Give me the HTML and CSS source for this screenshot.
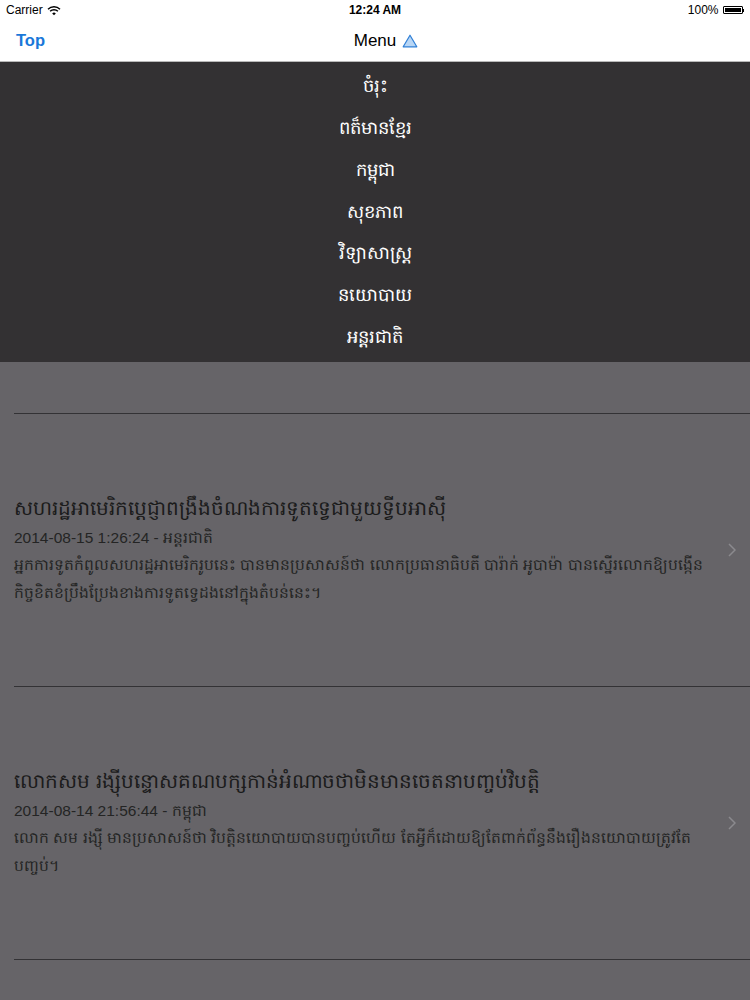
FILE: index.html
```html
<!DOCTYPE html>
<html lang="km">
<head>
<meta charset="utf-8">
<title>Menu</title>
<link rel="stylesheet" href="styles.css">
</head>
<body>
<div class="status">
  <div class="st-left">Carrier
    <svg class="wifi" width="14" height="11" viewBox="0 0 14 11"><path d="M1 4.2a8.5 8.5 0 0 1 12 0" fill="none" stroke="#000" stroke-width="1.4"/><path d="M3.1 6.3a5.5 5.5 0 0 1 7.8 0" fill="none" stroke="#000" stroke-width="1.4"/><path d="M5.2 8.4a2.5 2.5 0 0 1 3.6 0L7 10.3z" fill="#000"/></svg>
  </div>
  <div class="st-mid">12:24 AM</div>
  <div class="st-right">100%
    <span class="batt"><span class="batt-fill"></span></span><span class="batt-tip"></span>
  </div>
</div>
<div class="navbar">
  <div class="nav-left">Top</div>
  <div class="nav-title">Menu
    <svg class="tri" width="16" height="14" viewBox="0 0 16 14"><path d="M8 1.2L14.8 12.8H1.2z" fill="#b8d6f5" stroke="#2f7fd6" stroke-width="1.2" stroke-linejoin="round"/></svg>
  </div>
  <div class="nav-right"></div>
</div>
<div class="menu">
  <div class="menu-item">ចំរុះ</div>
  <div class="menu-item">ពត៏មានខ្មែរ</div>
  <div class="menu-item">កម្ពុជា</div>
  <div class="menu-item">សុខភាព</div>
  <div class="menu-item">វិទ្យាសាស្ត្រ</div>
  <div class="menu-item">នយោបាយ</div>
  <div class="menu-item">អន្តរជាតិ</div>
</div>
<div class="list">
  <div class="top-gap"></div>
  <div class="row">
    <div class="row-body">
      <div class="row-title">សហរដ្ឋអាមេរិកប្តេជ្ញាពង្រឹងចំណងការទូតទ្វេជាមួយទ្វីបអាស៊ី</div>
      <div class="row-date">2014-08-15 1:26:24 - អន្តរជាតិ</div>
      <div class="row-desc"> អ្នកការទូតកំពូលសហរដ្ឋអាមេរិករូបនេះ បានមានប្រសាសន៍ថា លោកប្រធានាធិបតី បារ៉ាក់ អូបាម៉ា បានស្នើរលោកឱ្យបង្កើន កិច្ចខិតខំប្រឹងប្រែងខាងការទូតទ្វេដងនៅក្នុងតំបន់នេះ។</div>
    </div>
    <svg class="chev" width="8" height="14" viewBox="0 0 8 14"><path d="M1 1l6 6-6 6" fill="none" stroke="#8b8a8e" stroke-width="1.5"/></svg>
  </div>
  <div class="row">
    <div class="row-body">
      <div class="row-title">លោកសម រង្ស៊ីបន្ទោសគណបក្សកាន់អំណាចថាមិនមានចេតនាបញ្ចប់វិបត្តិ</div>
      <div class="row-date">2014-08-14 21:56:44 - កម្ពុជា</div>
      <div class="row-desc"> លោក សម រង្ស៊ី មានប្រសាសន៍ថា វិបត្តិនយោបាយបានបញ្ចប់ហើយ តែអ្វីក៏ដោយឱ្យតែពាក់ព័ន្ធនឹងរឿងនយោបាយត្រូវតែ បញ្ចប់។</div>
    </div>
    <svg class="chev" width="8" height="14" viewBox="0 0 8 14"><path d="M1 1l6 6-6 6" fill="none" stroke="#8b8a8e" stroke-width="1.5"/></svg>
  </div>
</div>
</body>
</html>
```
FILE: styles.css
```css
html, body {
  margin: 0;
  padding: 0;
}
body {
  width: 750px;
  height: 1000px;
  overflow: hidden;
  background: #666468;
  font-family: "Liberation Sans", "Noto Sans", sans-serif;
}
.status {
  height: 20px;
  background: #fff;
  display: flex;
  align-items: center;
  justify-content: space-between;
  padding: 0 6px;
  font-size: 12px;
  color: #000;
}
.st-left {
  display: flex;
  align-items: center;
  gap: 4px;
  width: 120px;
}
.st-mid {
  font-weight: bold;
  font-size: 12px;
}
.st-right {
  display: flex;
  align-items: center;
  justify-content: flex-end;
  width: 120px;
}
.batt {
  display: inline-block;
  width: 20px;
  height: 8px;
  border: 1px solid #000;
  border-radius: 1px;
  margin-left: 4px;
  padding: 1px;
  box-sizing: border-box;
}
.batt-fill {
  display: block;
  width: 100%;
  height: 100%;
  background: #000;
}
.batt-tip {
  display: inline-block;
  width: 1.5px;
  height: 3px;
  background: #000;
}
.navbar {
  height: 42px;
  background: #fff;
  display: flex;
  align-items: center;
  justify-content: space-between;
  padding: 0 16px;
  box-sizing: border-box;
  border-bottom: 1px solid #b9b9b9;
}
.nav-left {
  width: 120px;
  color: #1a78d9;
  font-size: 16.5px;
  font-weight: bold;
}
.nav-right {
  width: 120px;
}
.nav-title {
  display: flex;
  align-items: center;
  gap: 6px;
  font-size: 17px;
  color: #000;
  padding-left: 22px;
}
.tri {
  margin-top: 1px;
}
.menu {
  background: #333133;
  height: 300px;
  box-sizing: border-box;
  padding-top: 7px;
  display: flex;
  flex-direction: column;
  align-items: center;
}
.menu-item {
  height: 43.2px;
  line-height: 34px;
  color: #fff;
  font-size: 18px;
  text-align: center;
}
.list {
  padding-left: 14px;
}
.top-gap {
  height: 51px;
  border-bottom: 1px solid #333235;
}
.row {
  height: 272px;
  border-bottom: 1px solid #333235;
  display: flex;
  align-items: center;
  padding-right: 14px;
}
.row-body {
  flex: 1;
}
.row-title {
  font-size: 20px;
  color: #1b1b1b;
  line-height: 30px;
}
.row-date {
  font-size: 15.5px;
  color: #242424;
  line-height: 26px;
  margin-top: 2px;
}
.row-desc {
  font-size: 15.5px;
  color: #242424;
  line-height: 28px;
}
.chev {
  flex: none;
  margin-left: 6px;
}
```
